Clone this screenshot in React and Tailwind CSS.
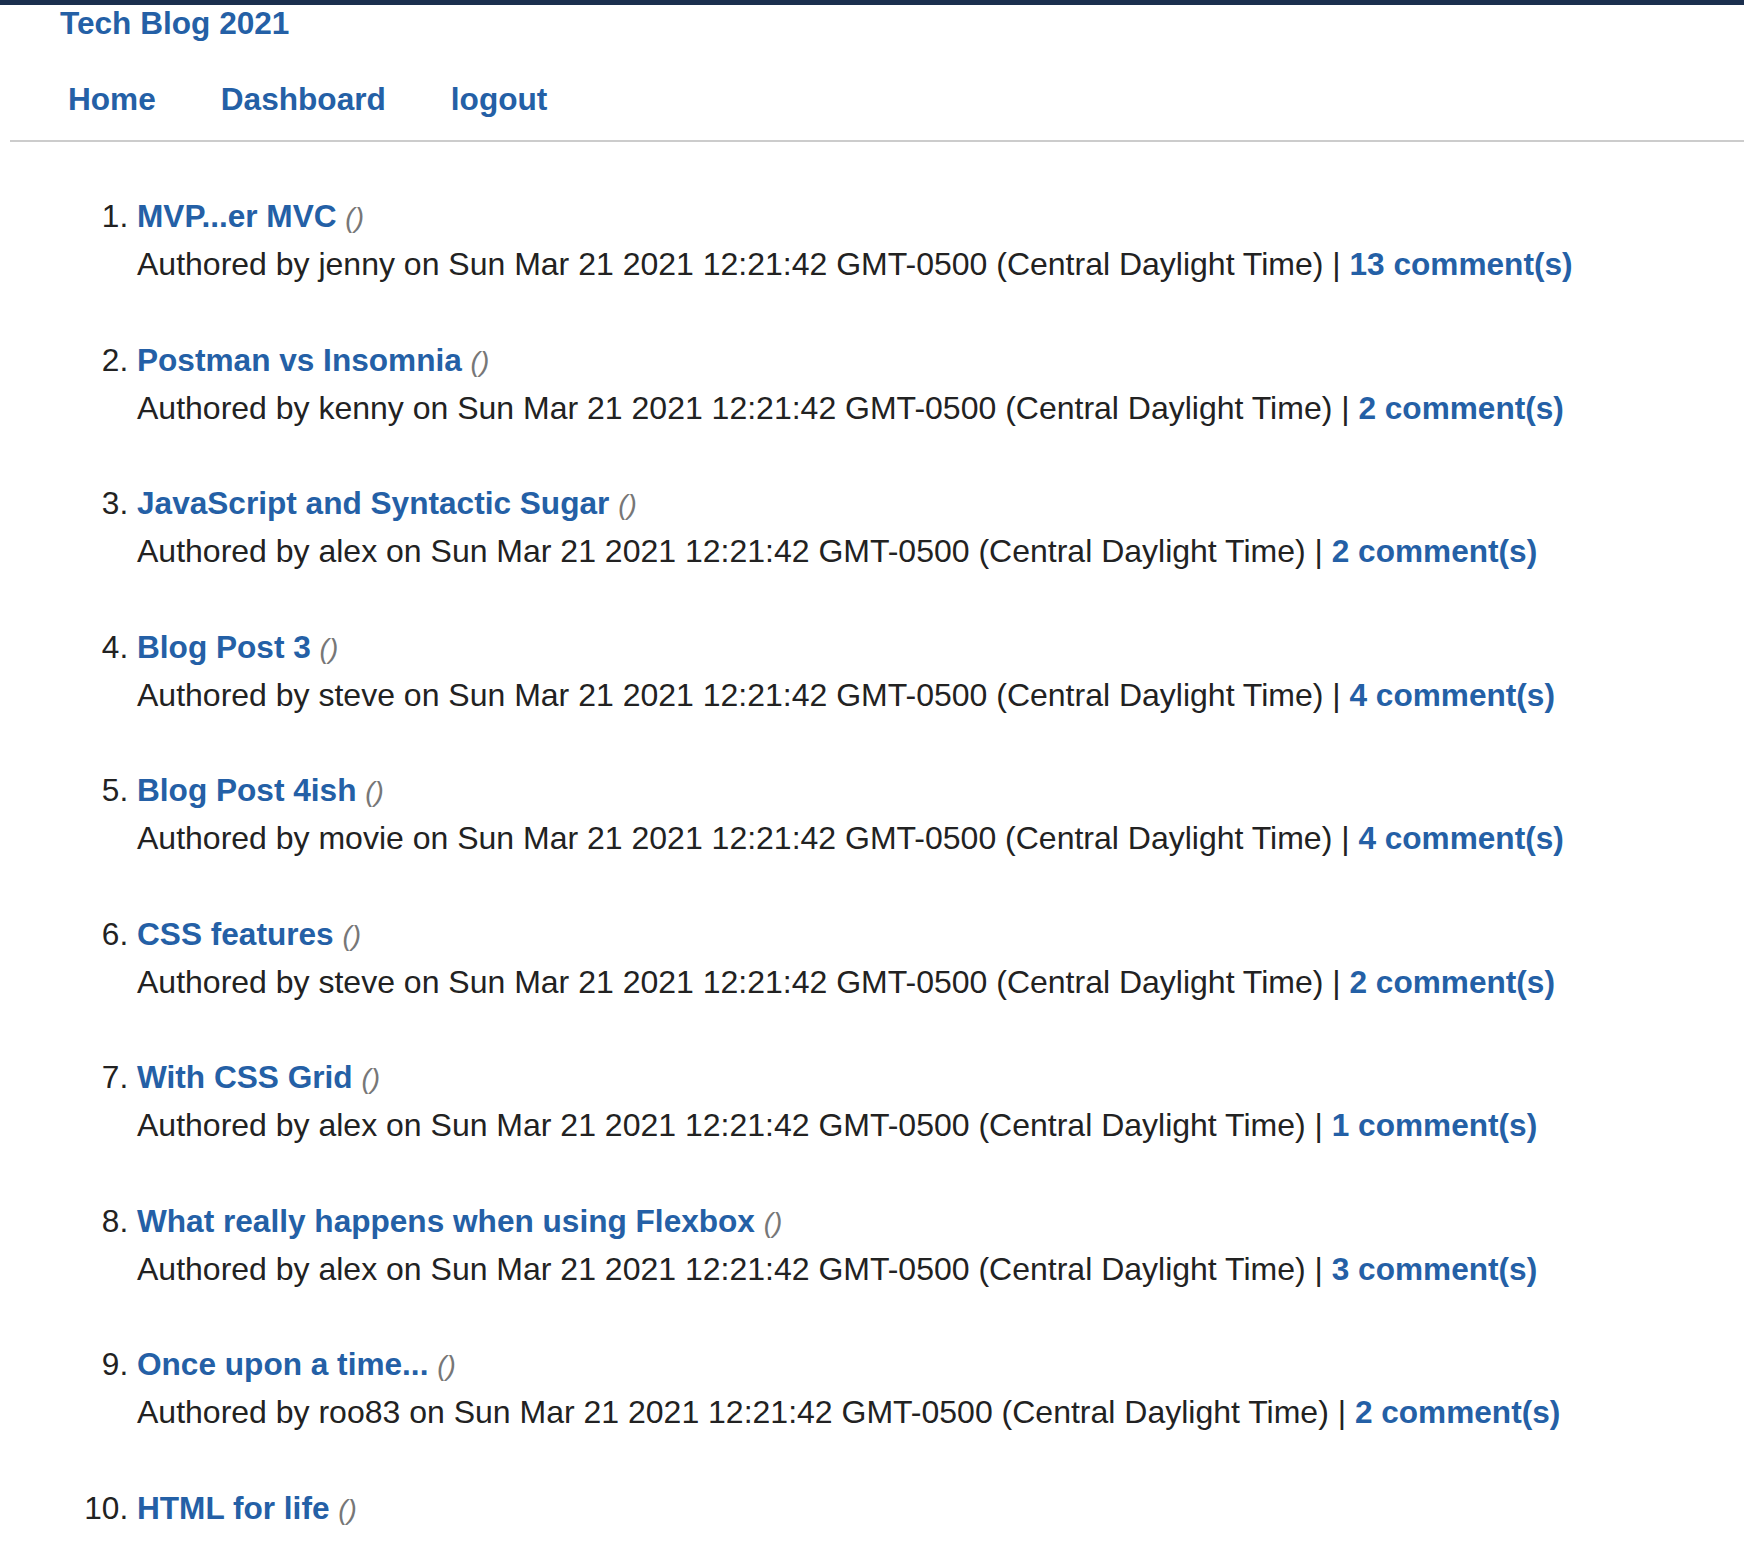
import React from 'react';

const posts = [
  { title: 'MVP...er MVC', author: 'jenny', comments: 13 },
  { title: 'Postman vs Insomnia', author: 'kenny', comments: 2 },
  { title: 'JavaScript and Syntactic Sugar', author: 'alex', comments: 2 },
  { title: 'Blog Post 3', author: 'steve', comments: 4 },
  { title: 'Blog Post 4ish', author: 'movie', comments: 4 },
  { title: 'CSS features', author: 'steve', comments: 2 },
  { title: 'With CSS Grid', author: 'alex', comments: 1 },
  { title: 'What really happens when using Flexbox', author: 'alex', comments: 3 },
  { title: 'Once upon a time...', author: 'roo83', comments: 2 },
  { title: 'HTML for life', author: 'jenny', comments: 1 },
];

const date = 'Sun Mar 21 2021 12:21:42 GMT-0500 (Central Daylight Time)';

function App() {
  return (
    <div className="min-h-screen bg-white text-[31.6px] text-[#222] font-['Liberation_Sans',Arial,sans-serif]">
      <div className="h-[5px] bg-[#1b2f4e]" />
      <header>
        <div className="pl-[60px] leading-[36px] font-bold text-[#2460a6]">Tech Blog 2021</div>
        <nav className="mt-[34px] flex gap-[65px] pl-[68px] leading-[48px] font-bold">
          <a href="#" className="text-[#2460a6]">Home</a>
          <a href="#" className="text-[#2460a6]">Dashboard</a>
          <a href="#" className="text-[#2460a6]">logout</a>
        </nav>
        <div className="mt-[17px] ml-[10px] h-[2px] bg-[#cccccc]" />
      </header>

      <main className="pt-[50px]">
        <ol className="list-decimal pl-[137px]">
          {posts.map((post, i) => (
            <li key={i} className="mb-[47.5px] leading-[48px]">
              <div>
                <a href="#" className="font-bold text-[#2460a6]">{post.title}</a>{' '}
                <span className="italic text-[28px] leading-none text-[#777]">()</span>
              </div>
              <div className="text-[32px]">
                Authored by {post.author} on {date} |{' '}
                <a href="#" className="font-bold text-[31.6px] text-[#2460a6]">{post.comments} comment(s)</a>
              </div>
            </li>
          ))}
        </ol>
      </main>
    </div>
  );
}

export default App;
